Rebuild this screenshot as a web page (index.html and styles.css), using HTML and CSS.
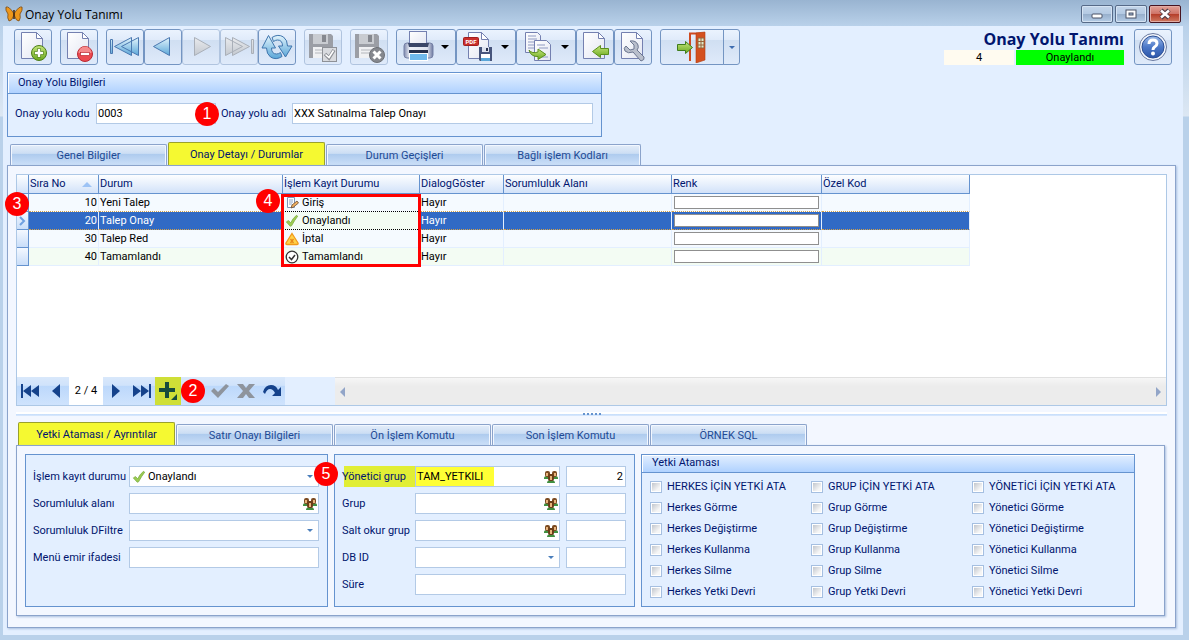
FILE: index.html
```
<!DOCTYPE html>
<html lang="tr">
<head>
    <meta charset="UTF-8">
    <meta name="viewport" content="width=device-width, initial-scale=1.0">
    <title>Onay Yolu Tanımı</title>
    <link rel="stylesheet" href="styles.css">
</head>
<body>
    <!-- Shared gradients and symbols -->
    <svg class="defs" width="0" height="0" aria-hidden="true">
        <defs>
            <linearGradient id="paper" x1="0" y1="0" x2="1" y2="1">
                <stop offset="0" stop-color="#ffffff"/><stop offset="1" stop-color="#e3e6f2"/>
            </linearGradient>
            <linearGradient id="blue" x1="0" y1="0" x2="0" y2="1">
                <stop offset="0" stop-color="#e2f4fc"/><stop offset="1" stop-color="#5aa6d8"/>
            </linearGradient>
            <linearGradient id="grey" x1="0" y1="0" x2="0" y2="1">
                <stop offset="0" stop-color="#e9ebee"/><stop offset="1" stop-color="#c3c8cf"/>
            </linearGradient>
            <linearGradient id="green" x1="0" y1="0" x2="0" y2="1">
                <stop offset="0" stop-color="#c5e67c"/><stop offset="1" stop-color="#6aa81e"/>
            </linearGradient>
            <linearGradient id="steel" x1="0" y1="0" x2="1" y2="0">
                <stop offset="0" stop-color="#7d88ad"/><stop offset=".2" stop-color="#eef1f8"/>
                <stop offset=".8" stop-color="#dde2ef"/><stop offset="1" stop-color="#6d789f"/>
            </linearGradient>
            <linearGradient id="help" x1="0" y1="0" x2="0" y2="1">
                <stop offset="0" stop-color="#9dbbe8"/><stop offset=".5" stop-color="#4c78c8"/><stop offset="1" stop-color="#2c55a8"/>
            </linearGradient>
        </defs>
        <symbol id="doc" viewBox="0 0 32 32">
            <path d="M4.500 1.500h15l6 6v20h-21z" fill="url(#paper)" stroke="#7480b0"/>
            <path d="M19.500 1.500v6h6z" fill="#fff" stroke="#7480b0"/>
        </symbol>
        <symbol id="tick" viewBox="0 0 16 16">
            <path d="M1.500 9l2.500-1.500 2.500 2.500Q9 5 13 1.500l1.500 1Q11 7 7.500 13.500L6 14z" fill="#9ccc52" stroke="#76a83a" stroke-width=".8"/>
        </symbol>
        <symbol id="people" viewBox="0 0 14 14">
            <path d="M0 8q0-2 3-2h8q3 0 3 2v1H0z" fill="#3f8f3f"/>
            <rect x="1" y="1" width="5" height="6" rx="2" fill="#7b4a20"/>
            <rect x="8" y="1" width="5" height="6" rx="2" fill="#7b4a20"/>
            <rect x="2" y="3" width="2" height="3" fill="#e8b47c"/>
            <rect x="10" y="3" width="2" height="3" fill="#e8b47c"/>
            <path d="M3 13q0-3 4-3t4 3z" fill="#3f8f3f"/>
            <rect x="4" y="4" width="6" height="7" rx="2" fill="#6a3d18"/>
            <rect x="6" y="6" width="2" height="4" fill="#e8b47c"/>
        </symbol>
        <symbol id="floppy" viewBox="0 0 26 26">
            <path d="M1 1h22l2 2v22H1z" fill="#9b9ea5"/>
            <rect x="5" y="1" width="15" height="10" fill="#c9ccd1"/>
            <rect x="14" y="2" width="4" height="7" fill="#85888f"/>
            <rect x="5" y="14" width="17" height="11" fill="#f0f1f3"/>
            <path d="M7 17h13M7 20h13" stroke="#b4b7bc"/>
        </symbol>
    </svg>

    <div class="window">
        <header class="titlebar">
            <svg class="logo" width="18" height="16" viewBox="0 0 18 16">
                <path d="M8.500 7Q4 0 1 1q-1 3 2 7-1 4 1 7 3 0 4.500-5z" fill="#ee971c" stroke="#7a4a14" stroke-width=".8"/>
                <path d="M9.500 7Q14 0 17 1q1 3-2 7 1 4-1 7-3 0-4.500-5z" fill="#ee971c" stroke="#7a4a14" stroke-width=".8"/>
                <path d="M9 4v9" stroke="#4a2c10" stroke-width="1.600"/>
            </svg>
            <span class="caption">Onay Yolu Tanımı</span>
            <button type="button" class="win-btn" aria-label="Simge durumuna küçült">
                <svg width="12" height="12" viewBox="0 0 12 12"><rect x="1" y="6" width="10" height="4" rx="1" fill="#fff" stroke="#4a5266"/></svg>
            </button>
            <button type="button" class="win-btn" aria-label="Ekranı kapla">
                <svg width="12" height="12" viewBox="0 0 12 12"><rect x="1" y="2" width="10" height="8" fill="#fff" stroke="#4a5266"/><rect x="4" y="5" width="4" height="2" fill="#9fb6d4" stroke="#4a5266"/></svg>
            </button>
            <button type="button" class="win-btn win-close" aria-label="Kapat">
                <svg width="12" height="12" viewBox="0 0 12 12"><path d="M2 2l8 8M10 2l-8 8" stroke="#4a3a44" stroke-width="4.500"/><path d="M2 2.500l8 7M10 2.500l-8 7" stroke="#fff" stroke-width="2.500"/></svg>
            </button>
        </header>

        <main class="client">
            <div class="toolbar">
                <div class="tool-group">
                    <button type="button" class="tool" aria-label="Yeni">
                        <svg viewBox="0 0 32 32"><use href="#doc"/><circle cx="22" cy="22" r="7.500" fill="url(#green)" stroke="#4d7d1a"/><path d="M22 17.500v9M17.500 22h9" stroke="#4d7d1a" stroke-width="4"/><path d="M22 18v8M18 22h8" stroke="#fff" stroke-width="2.500"/></svg>
                    </button>
                </div>
                <div class="tool-group">
                    <button type="button" class="tool" aria-label="Sil">
                        <svg viewBox="0 0 32 32"><use href="#doc"/><circle cx="22" cy="23" r="7.500" fill="#ec4a50" stroke="#b92932"/><path d="M15.500 22a6.500 6.500 0 0 1 13 0z" fill="#f58a8c"/><rect x="17.500" y="21.500" width="9" height="3" fill="#fff" stroke="#b92932" stroke-width=".7"/></svg>
                    </button>
                </div>
                <div class="tool-group">
                    <button type="button" class="tool" aria-label="İlk kayıt">
                        <svg viewBox="0 0 32 32"><g fill="url(#blue)" stroke="#4a78b0"><path d="M1.500 8.500h2v14h-2zM22.500 6.500v18l-17-9zM29.500 6.500v18l-17-9z"/></g></svg>
                    </button>
                    <button type="button" class="tool" aria-label="Önceki kayıt">
                        <svg viewBox="0 0 32 32"><path d="M22.500 6.500v18l-16-9z" fill="url(#blue)" stroke="#4a78b0"/></svg>
                    </button>
                    <button type="button" class="tool" disabled aria-label="Sonraki kayıt">
                        <svg viewBox="0 0 32 32"><path d="M9.500 6.500v18l16-9z" fill="url(#grey)" stroke="#a9afb8"/></svg>
                    </button>
                    <button type="button" class="tool" disabled aria-label="Son kayıt">
                        <svg viewBox="0 0 32 32"><g fill="url(#grey)" stroke="#a9afb8"><path d="M28.500 8.500h2v14h-2zM2.500 6.500v18l17-9zM9.500 6.500v18l17-9z"/></g></svg>
                    </button>
                    <button type="button" class="tool" aria-label="Yenile">
                        <svg viewBox="0 0 32 32"><g fill="url(#blue)" stroke="#3f75ad">
                            <path d="M11 6.500Q17 2.500 22.500 6 26.500 9 26.500 15H31l-6.500 11L17.500 15h4q0-6-5-6-2 0-4 1.500z"/>
                            <path d="M21 25.500Q15 29.500 9.500 26 5.500 23 5.500 17H1L7.500 4.500 14.500 17h-4q0 6 5 6 2 0 4-1.500z"/></g></svg>
                    </button>
                </div>
                <div class="tool-group">
                    <button type="button" class="tool" disabled aria-label="Kaydet">
                        <svg viewBox="0 0 32 32"><use href="#floppy" x="1" y="2" width="26" height="26"/><rect x="15.500" y="16.500" width="14" height="14" fill="#d9dbdf" stroke="#8e9197"/><path d="M18 23l4 4 5-8" fill="none" stroke="#8e9197" stroke-width="3.500"/><path d="M18.500 23.500l3.500 3 4.500-7" fill="none" stroke="#fff" stroke-width="1.600"/></svg>
                    </button>
                </div>
                <div class="tool-group">
                    <button type="button" class="tool" disabled aria-label="Vazgeç">
                        <svg viewBox="0 0 32 32"><use href="#floppy" x="1" y="2" width="26" height="26"/><circle cx="24" cy="24" r="7.500" fill="#85888e" stroke="#6e7177"/><path d="M20.500 20.500l7 7M27.500 20.500l-7 7" stroke="#fff" stroke-width="3"/></svg>
                    </button>
                </div>
                <div class="tool-group">
                    <button type="button" class="tool tool-wide" aria-label="Yazdır">
                        <svg viewBox="0 0 32 32">
                            <rect x="2" y="12" width="29" height="15" rx="3" fill="url(#steel)" stroke="#7480a6"/>
                            <rect x="7.500" y=".5" width="17" height="13" fill="url(#paper)" stroke="#7480b0"/>
                            <path d="M6 12h21l-1 4H7z" fill="#3a4668"/><path d="M7 19h19v3H7z" fill="#27304c"/>
                            <rect x="7.500" y="22.500" width="18" height="7" fill="#6fb9ec" stroke="#fff"/>
                        </svg>
                        <span class="drop"></span>
                    </button>
                    <button type="button" class="tool tool-wide" aria-label="PDF kaydet">
                        <svg viewBox="0 0 32 32">
                            <path d="M6.500 1.500h13l7 7v19h-20z" fill="url(#paper)" stroke="#7480b0"/><path d="M19.500 1.500v7h7z" fill="#fff" stroke="#7480b0"/>
                            <rect x="1.500" y="6.500" width="15" height="8" rx="1" fill="#c9302c" stroke="#a11d1d"/>
                            <text class="pdf" x="9" y="13">PDF</text>
                            <path d="M17 16h13v14H18l-1-1z" fill="#47557c"/><rect x="20" y="16" width="7" height="5" fill="#dde2ef"/><rect x="24" y="17" width="2" height="3" fill="#27304c"/>
                            <rect x="19" y="23" width="9" height="6" fill="#fff"/><rect x="19" y="27" width="9" height="3" fill="#5aa6d8"/>
                        </svg>
                        <span class="drop"></span>
                    </button>
                    <button type="button" class="tool tool-wide" aria-label="Kopyala">
                        <svg viewBox="0 0 32 32">
                            <path d="M3.500 1.500h12l3 3v17h-15z" fill="url(#paper)" stroke="#7480b0"/><path d="M6 5h8M6 8h9M6 11h6M6 14h6M6 17h6" stroke="#8f9ac2"/>
                            <path d="M12.500 9.500h12l4 4v16h-16z" fill="url(#paper)" stroke="#7480b0"/><path d="M15 14h8M17 17h9M20 26h6" stroke="#8f9ac2"/>
                            <path d="M7 19q3 4 9 2v-3l8 5.500-8 5v-3Q9 26 7 19z" fill="url(#green)" stroke="#5a8f1c"/>
                        </svg>
                        <span class="drop"></span>
                    </button>
                    <button type="button" class="tool" aria-label="Geri al">
                        <svg viewBox="0 0 32 32"><use href="#doc"/><path d="M13.500 20.500l8-6v3h8v6h-8v3z" fill="url(#green)" stroke="#5a8f1c"/></svg>
                    </button>
                    <button type="button" class="tool" aria-label="Ayarlar">
                        <svg viewBox="0 0 32 32"><use href="#doc"/><path d="M9 15l4 4 4-1 0-4-4-4q6-1 8 4 1 3-1 5l7 7q1 3-3 4l-8-9q-5 2-8-1-2-3 1-5z" fill="#b9bfcc" stroke="#6c7690"/></svg>
                    </button>
                </div>
                <div class="tool-group">
                    <button type="button" class="tool tool-exit" aria-label="Çıkış">
                        <svg viewBox="0 0 32 32"><path d="M14 30V2.500h14" fill="none" stroke="#cf4a20" stroke-width="2"/><path d="M20 2l9-1v28l-9 3z" fill="#d4501f" stroke="#b03c12" stroke-width=".6"/><path d="M22 7h6v10h-6zM25 7v10M22 10.500h6M22 14h6" fill="#dfe9c8" stroke="#98633a"/><path d="M1.500 13.500h8v-3l7 6-7 6v-3h-8z" fill="url(#green)" stroke="#3f7d1c"/></svg>
                    </button>
                    <button type="button" class="tool tool-drop" aria-label="Çıkış seçenekleri"><span class="drop drop-small"></span></button>
                </div>

                <div class="status">
                    <h1>Onay Yolu Tanımı</h1>
                    <div class="status-line">
                        <span class="status-code">4</span>
                        <span class="status-text">Onaylandı</span>
                    </div>
                </div>
                <button type="button" class="tool" aria-label="Yardım">
                    <svg viewBox="0 0 32 32"><circle cx="16" cy="16" r="13.500" fill="#f3f6fc" stroke="#68789f"/><circle cx="16" cy="16" r="11" fill="url(#help)" stroke="#2c4f95"/><path d="M12 13q0-4 4-4t4 3.500q0 2-2.500 3.500-1.500 1-1.500 3" fill="none" stroke="#fff" stroke-width="3"/><circle cx="16" cy="22.500" r="2" fill="#fff"/></svg>
                </button>
            </div>

            <section class="box info">
                <h2>Onay Yolu Bilgileri</h2>
                <div class="info-fields">
                    <label for="kod">Onay yolu kodu</label>
                    <div class="field">
                        <input type="text" id="kod" value="0003">
                        <span class="mark mark-1">1</span>
                    </div>
                    <label for="ad">Onay yolu adı</label>
                    <input type="text" id="ad" value="XXX Satınalma Talep Onayı">
                </div>
            </section>

            <nav class="tabs">
                <button type="button" class="tab">Genel Bilgiler</button>
                <button type="button" class="tab active">Onay Detayı / Durumlar</button>
                <button type="button" class="tab">Durum Geçişleri</button>
                <button type="button" class="tab">Bağlı işlem Kodları</button>
            </nav>

            <section class="page">
                <div class="grid-view">
                    <div class="grid-body">
                        <table>
                            <colgroup>
                                <col class="c-ind"><col class="c-no"><col class="c-durum"><col class="c-kayit"><col class="c-dialog"><col class="c-alan"><col class="c-renk"><col class="c-ozel">
                            </colgroup>
                            <thead>
                                <tr>
                                    <th></th>
                                    <th><span class="sorted">Sıra No</span></th>
                                    <th>Durum</th>
                                    <th>İşlem Kayıt Durumu</th>
                                    <th>DialogGöster</th>
                                    <th>Sorumluluk Alanı</th>
                                    <th>Renk</th>
                                    <th>Özel Kod</th>
                                </tr>
                            </thead>
                            <tbody>
                                <tr>
                                    <td class="ind"><span class="mark mark-3">3</span></td>
                                    <td class="num">10</td>
                                    <td>Yeni Talep</td>
                                    <td class="state">
                                        <svg width="14" height="14" viewBox="0 0 14 14"><path d="M2.500 1.500h7v10h-7z" fill="#fff" stroke="#7d95b8"/><path d="M4 4h4M4 6h4M4 8h3" stroke="#8aa3c6"/><path d="M6 12l1-3 5-4 1.500 2-5 4z" fill="#f0b060" stroke="#6a4a30" stroke-width=".8"/></svg>Giriş
                                        <span class="frame"></span><span class="mark mark-4">4</span>
                                    </td>
                                    <td>Hayır</td><td></td><td><span class="swatch"></span></td><td></td>
                                </tr>
                                <tr class="selected">
                                    <td class="ind"><svg width="8" height="10" viewBox="0 0 8 10"><path d="M2 1l4 4-4 4" fill="none" stroke="#6fa0e0" stroke-width="2"/></svg></td>
                                    <td class="num">20</td>
                                    <td>Talep Onay</td>
                                    <td class="state"><svg width="14" height="14"><use href="#tick"/></svg>Onaylandı</td>
                                    <td>Hayır</td><td></td><td><span class="swatch"></span></td><td></td>
                                </tr>
                                <tr>
                                    <td class="ind"></td>
                                    <td class="num">30</td>
                                    <td>Talep Red</td>
                                    <td class="state"><svg width="14" height="14" viewBox="0 0 14 14"><path d="M7 1.500l6 9.500q.5 1.500-1 1.500H2q-1.500 0-1-1.500z" fill="#ffd24a" stroke="#f09a1c" stroke-width="1.300"/><path d="M5.500 7l3 4M8.500 7l-3 4" stroke="#e8881a" stroke-width="1.300"/></svg>İptal</td>
                                    <td>Hayır</td><td></td><td><span class="swatch"></span></td><td></td>
                                </tr>
                                <tr>
                                    <td class="ind"></td>
                                    <td class="num">40</td>
                                    <td>Tamamlandı</td>
                                    <td class="state"><svg width="14" height="14" viewBox="0 0 14 14"><circle cx="7" cy="7" r="5.800" fill="#fff" stroke="#333" stroke-width="1.300"/><path d="M4 7l2.500 2.500L10 5" fill="none" stroke="#333" stroke-width="1.500"/></svg>Tamamlandı</td>
                                    <td>Hayır</td><td></td><td><span class="swatch"></span></td><td></td>
                                </tr>
                            </tbody>
                        </table>
                    </div>
                    <div class="grid-footer">
                        <div class="navigator">
                            <button type="button" aria-label="İlk"><svg viewBox="0 0 20 16"><path d="M1 1h2v14H1zM11 2v12L3 8zM19 2v12l-8-6z"/></svg></button>
                            <button type="button" aria-label="Önceki"><svg viewBox="0 0 20 16"><path d="M14 1v14L6 8z"/></svg></button>
                            <span class="pos">2 / 4</span>
                            <button type="button" aria-label="Sonraki"><svg viewBox="0 0 20 16"><path d="M6 1v14l8-7z"/></svg></button>
                            <button type="button" aria-label="Son"><svg viewBox="0 0 20 16"><path d="M17 1h2v14h-2zM9 2v12l8-6zM1 2v12l8-6z"/></svg></button>
                            <button type="button" class="add" aria-label="Ekle"><svg viewBox="0 0 20 18"><path d="M7 0h4v6h6v4h-6v6H7v-6H1V6h6zM19 12v6h-6z"/></svg></button>
                            <span class="slot"><span class="mark mark-2">2</span></span>
                            <button type="button" disabled aria-label="Onayla"><svg viewBox="0 0 20 16"><path d="M1 8l3-3 4 4 8-8 3 2L8 15z"/></svg></button>
                            <button type="button" disabled aria-label="İptal"><svg viewBox="0 0 20 16"><path d="M1 1h6l3 4 3-4h6l-6 7 6 7h-6l-3-4-3 4H1l6-7z"/></svg></button>
                            <button type="button" aria-label="Yenile"><svg viewBox="0 0 20 16"><path d="M1 9Q3 2 9 2q5 0 7 5l3-3v9h-9l3-3Q11 6 8 6 5 6 3 11z"/></svg></button>
                        </div>
                        <div class="scroll">
                            <span class="arrow-left"></span>
                            <span class="arrow-right"></span>
                        </div>
                    </div>
                </div>

                <div class="splitter"><i></i><i></i><i></i><i></i><i></i></div>

                <nav class="tabs">
                    <button type="button" class="tab active">Yetki Ataması / Ayrıntılar</button>
                    <button type="button" class="tab">Satır Onayı Bilgileri</button>
                    <button type="button" class="tab">Ön İşlem Komutu</button>
                    <button type="button" class="tab">Son İşlem Komutu</button>
                    <button type="button" class="tab">ÖRNEK SQL</button>
                </nav>

                <div class="detail">
                    <div class="box form-state">
                        <label for="kayit">İşlem kayıt durumu</label>
                        <div class="field with-icon">
                            <select id="kayit"><option>Onaylandı</option></select>
                            <svg class="field-icon" width="14" height="14"><use href="#tick"/></svg>
                            <span class="caret"></span>
                            <span class="mark mark-5">5</span>
                        </div>
                        <label for="alan">Sorumluluk alanı</label>
                        <div class="field"><input type="text" id="alan"><svg class="people" width="14" height="14"><use href="#people"/></svg></div>
                        <label for="filtre">Sorumluluk DFiltre</label>
                        <div class="field"><select id="filtre"><option></option></select><span class="caret"></span></div>
                        <label for="emir">Menü emir ifadesi</label>
                        <input type="text" id="emir">
                    </div>

                    <div class="box form-group">
                        <label for="yonetici" class="hl">Yönetici grup</label>
                        <div class="field"><input type="text" id="yonetici" class="hl-input" value="TAM_YETKILI"><svg class="people" width="14" height="14"><use href="#people"/></svg></div>
                        <input type="text" class="right" aria-label="Yönetici grup no" value="2">
                        <label for="grup">Grup</label>
                        <div class="field"><input type="text" id="grup"><svg class="people" width="14" height="14"><use href="#people"/></svg></div>
                        <input type="text" class="right" aria-label="Grup no">
                        <label for="okur">Salt okur grup</label>
                        <div class="field"><input type="text" id="okur"><svg class="people" width="14" height="14"><use href="#people"/></svg></div>
                        <input type="text" class="right" aria-label="Salt okur grup no">
                        <label for="dbid">DB ID</label>
                        <div class="field"><select id="dbid"><option></option></select><span class="caret"></span></div>
                        <input type="text" class="right" aria-label="DB ID no">
                        <label for="sure">Süre</label>
                        <input type="text" id="sure" class="span">
                    </div>

                    <div class="box rights">
                        <h2>Yetki Ataması</h2>
                        <div class="checks">
                            <label><input type="checkbox">HERKES İÇİN YETKİ ATA</label>
                            <label><input type="checkbox">GRUP İÇİN YETKİ ATA</label>
                            <label><input type="checkbox">YÖNETİCİ İÇİN YETKİ ATA</label>
                            <label><input type="checkbox">Herkes Görme</label>
                            <label><input type="checkbox">Grup Görme</label>
                            <label><input type="checkbox">Yönetici Görme</label>
                            <label><input type="checkbox">Herkes Değiştirme</label>
                            <label><input type="checkbox">Grup Değiştirme</label>
                            <label><input type="checkbox">Yönetici Değiştirme</label>
                            <label><input type="checkbox">Herkes Kullanma</label>
                            <label><input type="checkbox">Grup Kullanma</label>
                            <label><input type="checkbox">Yönetici Kullanma</label>
                            <label><input type="checkbox">Herkes Silme</label>
                            <label><input type="checkbox">Grup Silme</label>
                            <label><input type="checkbox">Yönetici Silme</label>
                            <label><input type="checkbox">Herkes Yetki Devri</label>
                            <label><input type="checkbox">Grup Yetki Devri</label>
                            <label><input type="checkbox">Yönetici Yetki Devri</label>
                        </div>
                    </div>
                </div>
            </section>
        </main>
    </div>
</body>
</html>
```
FILE: styles.css
```
* {
    box-sizing: border-box;
}
body {
    margin: 0;
    font-family: Roboto, sans-serif;
    font-size: 11px;
    line-height: 14px;
    color: #00156e;
}
button, input, select {
    font: inherit;
    margin: 0;
}
h1, h2 {
    margin: 0;
}
.defs {
    position: absolute;
}

/* window frame */
.window {
    display: flex;
    flex-direction: column;
    min-height: 100vh;
    padding: 0 6px 5px 3px;
    background: linear-gradient(#99b4d1 0, #b9d1ea 26px, #dce7f3 116px, #b9d1ea 117px);
}
.titlebar {
    display: flex;
    align-items: flex-start;
    gap: 2px;
    height: 26px;
    padding: 5px 2px 0 2px;
}
.logo {
    margin-top: 1px;
}
.caption {
    flex: 1;
    padding-top: 2px;
    font-family: "Open Sans", sans-serif;
    font-size: 12px;
    line-height: 16px;
    color: #000;
}
.win-btn {
    display: flex;
    align-items: center;
    justify-content: center;
    width: 32px;
    height: 18px;
    padding: 0;
    border: 1px solid #566a88;
    border-radius: 2px;
    background: linear-gradient(#c3d5ea 0%, #b4cae3 48%, #96aecb 50%, #b4cce6 100%);
    box-shadow: inset 0 0 0 1px #d5e3f3;
}
.win-close {
    border-color: #471420;
    background: linear-gradient(#e2a197 0%, #cf7468 48%, #b43c28 50%, #cf7a62 100%);
    box-shadow: inset 0 0 0 1px #e2aca4;
}
.client {
    display: flex;
    flex: 1;
    flex-direction: column;
    padding: 3px 7px 7px 4px;
    background: #e3efff;
}

/* toolbar */
.toolbar {
    display: flex;
    gap: 8px;
    padding: 0 4px 0 7px;
}
.tool-group {
    display: flex;
}
.tool {
    display: flex;
    align-items: center;
    justify-content: center;
    width: 38px;
    height: 36px;
    padding: 0;
    border: 1px solid #7495c2;
    border-radius: 3px;
    background: linear-gradient(#ebf3fe 0%, #e0ebfa 28%, #d0dff2 30%, #dfeafa 100%);
}
.tool svg {
    width: 32px;
    height: 32px;
}
.tool:disabled {
    border-color: #b0c4df;
}
.tool-wide {
    justify-content: flex-start;
    gap: 7px;
    width: 60px;
    padding-left: 5px;
}
.tool-exit {
    width: 64px;
    border-radius: 3px 0 0 3px;
}
.tool-drop {
    width: 17px;
    margin-left: -1px;
    border-radius: 0 3px 3px 0;
}
.drop {
    border: 4px solid transparent;
    border-top-color: #000;
    border-bottom: 0;
}
.drop-small {
    border-width: 3px;
    border-top-color: #3d6cb0;
    border-bottom: 0;
}
.pdf {
    font-size: 6px;
    font-weight: bold;
    fill: #fff;
    text-anchor: middle;
}
.status {
    margin-left: auto;
    margin-right: 2px;
    color: #000;
    text-align: center;
}
.status h1 {
    font-family: "Open Sans", sans-serif;
    font-size: 16px;
    line-height: 21px;
    text-align: right;
    color: #00156e;
}
.status-line {
    display: flex;
    gap: 2px;
    line-height: 15px;
}
.status-code {
    width: 70px;
    background: #fffbf0;
}
.status-text {
    width: 108px;
    background: #00ff00;
}

/* boxes and fields */
.box {
    border: 1px solid #6593cf;
    background: #e3efff;
}
.box h2 {
    padding: 2px 10px 3px;
    border-bottom: 1px solid #6593cf;
    background: linear-gradient(#e3efff, #b0d2ff);
    box-shadow: inset 1px 1px 0 #fff;
    font-size: 11px;
    font-weight: normal;
}
input[type="text"], select {
    display: block;
    width: 100%;
    height: 21px;
    padding: 0 2px 0 1px;
    border: 1px solid #b3cae6;
    border-radius: 0;
    background: #fff;
    color: #000;
    appearance: none;
}
input.right {
    text-align: right;
}
.field {
    position: relative;
}
.caret {
    position: absolute;
    right: 6px;
    top: 9px;
    border: 3px solid transparent;
    border-top-color: #4a7ebb;
    border-bottom: 0;
    pointer-events: none;
}
.people {
    position: absolute;
    right: 2px;
    top: 4px;
}
.with-icon select {
    padding-left: 18px;
}
.field-icon {
    position: absolute;
    left: 3px;
    top: 4px;
}
.info {
    width: 595px;
    margin-top: 7px;
}
.info h2 {
    line-height: 15px;
}
.info-fields {
    display: grid;
    grid-template-columns: 76px 120px 66px 301px;
    column-gap: 5px;
    align-items: center;
    padding: 9px 7px 12px;
}

/* tabs */
.tabs {
    display: flex;
    align-items: flex-end;
    gap: 1px;
    margin: 5px 0 0 3px;
}
.tab {
    width: 157px;
    height: 21px;
    padding: 2px 0 0;
    border: 1px solid #8ba3cb;
    border-bottom: 0;
    border-radius: 2px 2px 0 0;
    background: linear-gradient(#e4edf9 0%, #ccdef4 42%, #aecbee 46%, #cbdff8 100%);
    box-shadow: inset 1px 1px 0 #f2f7ff, inset -1px 0 0 #f2f7ff;
    color: #1e4a94;
}
.tab.active {
    height: 23px;
    border-color: #9aa12c;
    background: #f5f931;
    box-shadow: none;
    color: #00156e;
}
.page {
    display: flex;
    flex: 1;
    flex-direction: column;
    padding: 8px 8px 11px;
    border: 1px solid #8ba3cb;
    background: #f3f7ff;
    box-shadow: 1px 1px 2px #a9bfdf;
}
.page .tabs {
    margin: 6px 0 0 2px;
}

/* grid */
.grid-view {
    display: flex;
    flex: 1;
    flex-direction: column;
    border: 1px solid #adc8e6;
    background: #fff;
}
.grid-body {
    flex: 1;
}
table {
    width: 953px;
    table-layout: fixed;
    border-collapse: separate;
    border-spacing: 0;
    color: #000;
}
.c-ind { width: 12px; }
.c-no { width: 70px; }
.c-durum { width: 184px; }
.c-kayit { width: 137px; }
.c-dialog { width: 84px; }
.c-alan { width: 168px; }
.c-renk { width: 150px; }
.c-ozel { width: 148px; }
th {
    height: 19px;
    padding: 0 1px;
    border-right: 1px solid #6593cf;
    border-bottom: 1px solid #6593cf;
    background: linear-gradient(#fdfeff, #d2e2f9);
    font-weight: normal;
    text-align: left;
    color: #00156e;
}
.sorted {
    display: flex;
    align-items: center;
    justify-content: space-between;
    padding-right: 5px;
}
.sorted::after {
    content: "";
    border: 5px solid transparent;
    border-bottom-color: #9dc3f5;
    border-top: 0;
}
td {
    height: 18px;
    padding: 0 1px;
    border-right: 1px solid #e3efff;
    border-bottom: 1px solid #e3efff;
    background: #f5faff;
    line-height: 16px;
}
tr:nth-child(even) td {
    background: #f3fcf3;
}
tbody .ind, tbody tr:nth-child(even) .ind {
    position: relative;
    border-color: #6593cf;
    background: linear-gradient(#f4f8ff, #c9def9);
}
.ind svg {
    display: block;
}
.num {
    text-align: right;
}
tbody tr:has(+ .selected) td:not(.ind), tbody .selected td:not(.ind) {
    border-bottom: 1px dotted #d3a04a;
}
tbody tr.selected td:not(.ind):not(.state) {
    background: #316ac5;
    color: #fff;
}
tbody tr:has(+ .selected) td.state:not(.ind), tbody .selected td.state:not(.ind) {
    border-bottom-color: #000;
}
.state {
    position: relative;
    padding-left: 2px;
}
.state svg {
    margin-top: 1px;
    margin-right: 3px;
    vertical-align: top;
}
.swatch {
    display: block;
    height: 13px;
    margin: 0 1px;
    border: 1px solid #8f8f8f;
    background: #fff;
}

/* grid footer */
.grid-footer {
    display: flex;
    height: 28px;
    background: #e3efff;
}
.navigator {
    display: flex;
    width: 318px;
}
.navigator button, .slot {
    position: relative;
    display: flex;
    align-items: center;
    justify-content: center;
    width: 26px;
    padding: 0;
    border: 0;
    background: linear-gradient(#d9e8fb 0%, #d0e3fb 30%, #bcd8fb 32%, #cfe3fd 100%);
}
.navigator svg {
    width: 20px;
    height: 16px;
    fill: #15428b;
}
.navigator button:disabled svg {
    fill: #8e949d;
}
.navigator .add {
    background: #cfdf37;
}
.navigator .add svg {
    height: 18px;
    fill: #174c3c;
}
.pos {
    width: 34px;
    background: #fff;
    line-height: 28px;
    text-align: center;
    color: #000;
}
.scroll {
    display: flex;
    flex: 1;
    align-items: center;
    justify-content: space-between;
    padding: 0 5px;
    border-top: 1px solid #e0e0e0;
    background: linear-gradient(#f6f6f6, #ececec 30%);
}
.arrow-left, .arrow-right {
    border: 5px solid transparent;
}
.arrow-left {
    border-right-color: #92a5c8;
    border-left: 0;
}
.arrow-right {
    border-left-color: #92a5c8;
    border-right: 0;
}
.splitter {
    display: flex;
    justify-content: center;
    gap: 2px;
    height: 4px;
    margin-top: 6px;
    border-top: 1px solid #fff;
    background: linear-gradient(#fff 1px, #c4dcfb 1px, #dbe9fd);
}
.splitter i {
    width: 2px;
    height: 2px;
    background: #6593cf;
}

/* detail page */
.detail {
    display: flex;
    gap: 6px;
    margin-right: 2px;
    padding: 8px;
    border: 1px solid #8ba3cb;
    box-shadow: 1px 1px 2px #a9bfdf;
}
.form-state, .form-group {
    display: grid;
    grid-auto-rows: 21px;
    gap: 6px;
    align-items: center;
    padding: 11px 8px;
}
.form-state {
    grid-template-columns: 90px 190px;
    width: 303px;
    padding-left: 7px;
}
.form-group {
    grid-template-columns: 67px 145px 60px;
    width: 301px;
    padding-left: 7px;
}
.form-group .span {
    grid-column: span 2;
}
.form-group .hl {
    height: 21px;
    margin-right: -6px;
    background: linear-gradient(90deg, transparent 2px, #e1ee35 2px);
    line-height: 21px;
}
.form-group .hl-input {
    background: linear-gradient(90deg, #ffff35 78px, #fff 78px);
}
label {
    white-space: nowrap;
}
.rights {
    width: 494px;
    padding-bottom: 3px;
}
.rights h2 {
    line-height: 12px;
}
.checks {
    display: grid;
    grid-template-columns: 161px 161px 1fr;
    grid-auto-rows: 21px;
    padding: 3px 0 0 8px;
}
.checks label {
    display: flex;
    align-items: center;
    gap: 5px;
}
.checks input {
    width: 12px;
    height: 12px;
    border: 1px solid #a5bfe1;
    background: linear-gradient(135deg, #b9bec6, #f6f6f6 70%);
    box-shadow: inset 0 0 0 1px #fff;
    appearance: none;
}

/* numbered markers */
.mark {
    position: absolute;
    z-index: 2;
    width: 24px;
    height: 24px;
    border-radius: 50%;
    background: #ff0000;
    font-family: "Liberation Sans", Arial, sans-serif;
    font-size: 16px;
    line-height: 24px;
    text-align: center;
    color: #fff;
}
.mark-1 {
    right: -3px;
    top: -1px;
}
.mark-2 {
    left: 0;
    top: 2px;
}
.mark-3 {
    left: -12px;
    top: -2px;
}
.mark-4 {
    left: -27px;
    top: -5px;
}
.mark-5 {
    right: -19px;
    top: -4px;
}
.frame {
    position: absolute;
    z-index: 1;
    top: 0;
    left: -2px;
    width: 140px;
    height: 73px;
    border: 3px solid #ff0000;
}
```
